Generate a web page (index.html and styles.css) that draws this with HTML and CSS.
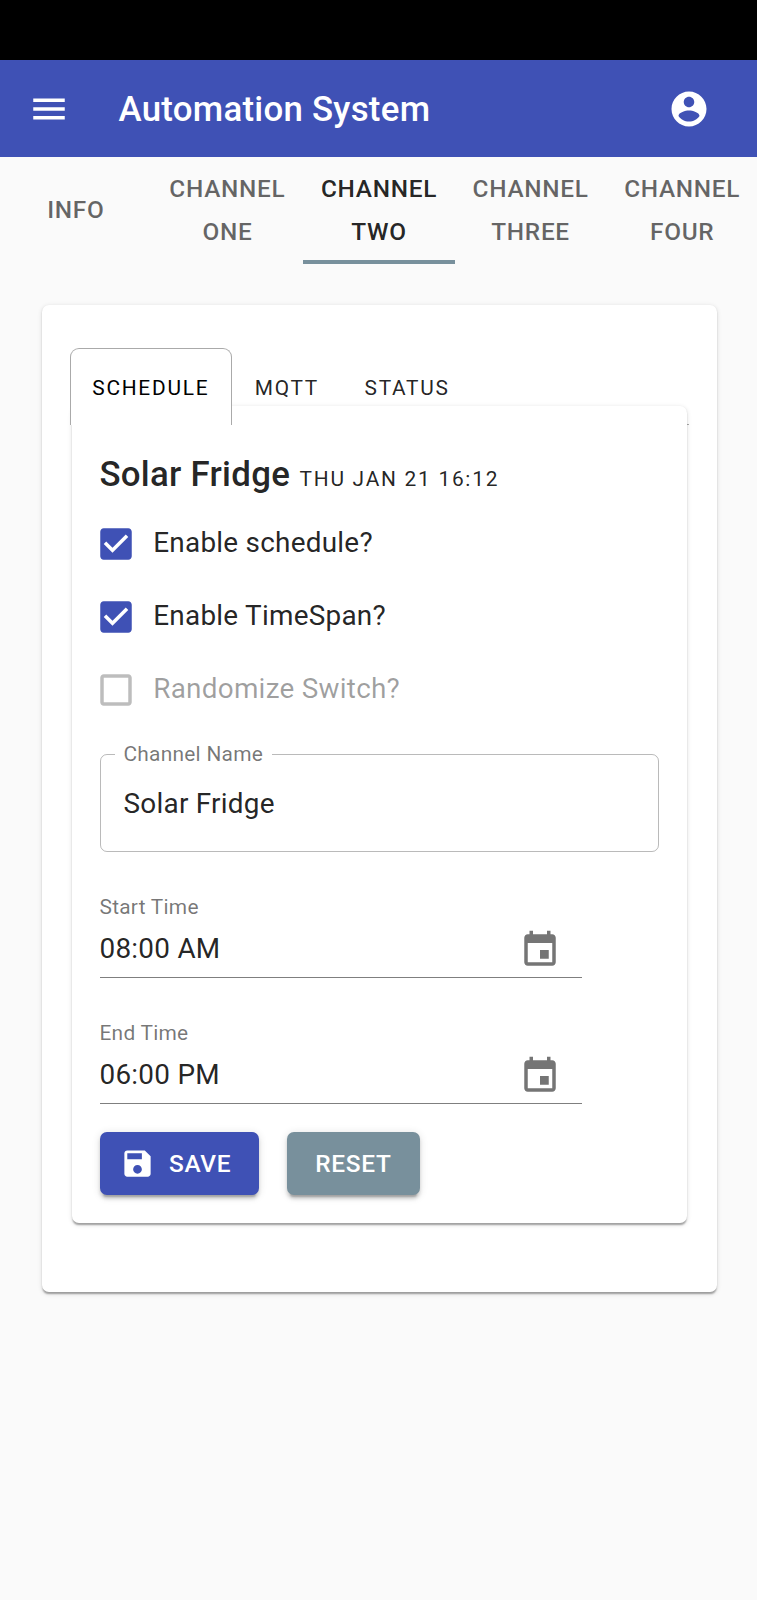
FILE: index.html
```html
<!DOCTYPE html>
<html lang="en">
<head>
<meta charset="utf-8">
<title>Automation System</title>
<link rel="stylesheet" href="styles.css">
</head>
<body>
<div class="status-bar"></div>
<header class="app-bar">
  <svg class="icon" viewBox="0 0 24 24"><path d="M3 18h18v-2H3v2zm0-5h18v-2H3v2zm0-7v2h18V6H3z"/></svg>
  <h1 class="app-title">Automation System</h1>
  <svg class="icon" viewBox="0 0 24 24"><path d="M12 2C6.48 2 2 6.48 2 12s4.48 10 10 10 10-4.480 10-10S17.520 2 12 2zm0 3c1.660 0 3 1.340 3 3s-1.340 3-3 3-3-1.340-3-3 1.340-3 3-3zm0 14.200c-2.500 0-4.710-1.280-6-3.220.030-1.990 4-3.080 6-3.080 1.990 0 5.970 1.090 6 3.080-1.290 1.940-3.500 3.220-6 3.220z"/></svg>
</header>
<nav class="channels">
  <a class="channel">Info</a>
  <a class="channel">Channel One</a>
  <a class="channel channel-active">Channel Two</a>
  <a class="channel">Channel Three</a>
  <a class="channel">Channel Four</a>
</nav>
<main class="card">
  <div class="tabs">
    <div class="tab tab-active">Schedule</div>
    <div class="tab">MQTT</div>
    <div class="tab">Status</div>
  </div>
  <section class="panel">
    <div class="heading"><h2 class="name">Solar Fridge</h2><span class="date">Thu Jan 21 16:12</span></div>
    <div class="check">
      <svg class="box" viewBox="0 0 24 24"><path d="M19 3H5c-1.110 0-2 .9-2 2v14c0 1.100.890 2 2 2h14c1.110 0 2-.9 2-2V5c0-1.100-.890-2-2-2zm-9 14l-5-5 1.410-1.410L10 14.170l7.590-7.590L19 8l-9 9z"/></svg>
      <span class="check-text">Enable schedule?</span>
    </div>
    <div class="check">
      <svg class="box" viewBox="0 0 24 24"><path d="M19 3H5c-1.110 0-2 .9-2 2v14c0 1.100.890 2 2 2h14c1.110 0 2-.9 2-2V5c0-1.100-.890-2-2-2zm-9 14l-5-5 1.410-1.410L10 14.170l7.590-7.590L19 8l-9 9z"/></svg>
      <span class="check-text">Enable TimeSpan?</span>
    </div>
    <div class="check check-disabled">
      <svg class="box" viewBox="0 0 24 24"><path d="M19 5v14H5V5h14m0-2H5c-1.100 0-2 .9-2 2v14c0 1.100.9 2 2 2h14c1.100 0 2-.9 2-2V5c0-1.100-.9-2-2-2z"/></svg>
      <span class="check-text">Randomize Switch?</span>
    </div>
    <div class="outlined">
      <span class="outlined-label">Channel Name</span>
      <span>Solar Fridge</span>
    </div>
    <div class="time">
      <span class="time-label">Start Time</span>
      <div class="time-row">
        <span class="time-value">08:00 AM</span>
        <svg class="icon" viewBox="0 0 24 24"><path d="M17 12h-5v5h5v-5zM16 1v2H8V1H6v2H5c-1.110 0-1.990.9-1.990 2L3 19c0 1.100.890 2 2 2h14c1.100 0 2-.9 2-2V5c0-1.100-.9-2-2-2h-1V1h-2zm3 18H5V8h14v11z"/></svg>
      </div>
    </div>
    <div class="time">
      <span class="time-label">End Time</span>
      <div class="time-row">
        <span class="time-value">06:00 PM</span>
        <svg class="icon" viewBox="0 0 24 24"><path d="M17 12h-5v5h5v-5zM16 1v2H8V1H6v2H5c-1.110 0-1.990.9-1.990 2L3 19c0 1.100.890 2 2 2h14c1.100 0 2-.9 2-2V5c0-1.100-.9-2-2-2h-1V1h-2zm3 18H5V8h14v11z"/></svg>
      </div>
    </div>
    <div class="actions">
      <button class="button button-save">
        <svg class="save-icon" viewBox="0 0 24 24"><path d="M17 3H5c-1.110 0-2 .9-2 2v14c0 1.100.890 2 2 2h14c1.100 0 2-.9 2-2V7l-4-4zm-5 16c-1.660 0-3-1.340-3-3s1.340-3 3-3 3 1.340 3 3-1.340 3-3 3zm3-10H5V5h10v4z"/></svg>
        Save
      </button>
      <button class="button button-reset">Reset</button>
    </div>
  </section>
</main>
</body>
</html>
```

FILE: styles.css
```css
* { box-sizing: border-box; }
body {
  margin: 0;
  min-height: 1600px;
  background: #fafafa;
  color: rgba(0, 0, 0, 0.87);
  font-family: Roboto, "Liberation Sans", sans-serif;
  font-size: 27.9px;
  letter-spacing: 0.009em;
}
svg { display: block; fill: currentColor; flex: none; }
h1, h2 { margin: 0; font-weight: 500; }

.status-bar { height: 59.5px; background: #000; }
.app-bar {
  display: flex;
  align-items: center;
  height: 97.5px;
  padding: 0.5px 47px 0 28px;
  background: #3f51b5;
  color: #fff;
}
.icon { width: 42px; height: 42px; }
.app-title {
  flex: 1;
  margin-left: 48.5px;
  padding-top: 2.5px;
  font-size: 34.85px;
  line-height: 56px;
  letter-spacing: 0.0075em;
}

.channels { display: flex; height: 107px; margin-right: -1px; }
.channel {
  flex: 1;
  display: flex;
  align-items: center;
  justify-content: center;
  padding: 0 10px;
  border-bottom: 4px solid transparent;
  border-top: 4px solid transparent;
  color: rgba(0, 0, 0, 0.6);
  font-size: 24.4px;
  font-weight: 500;
  line-height: 42.9px;
  letter-spacing: 0.02857em;
  text-align: center;
  text-transform: uppercase;
}
.channel-active { color: rgba(0, 0, 0, 0.87); border-bottom-color: #78909c; }

.card {
  margin: 41px 40.5px 0 41.5px;
  padding: 43px 28px 69.5px;
  border-radius: 7px;
  background: #fff;
  box-shadow: 0 3.5px 1.750px -1.750px rgba(0, 0, 0, 0.2), 0 1.750px 1.750px rgba(0, 0, 0, 0.14), 0 1.750px 5px rgba(0, 0, 0, 0.12);
}
.tabs {
  display: flex;
  height: 77px;
  border-bottom: 1px solid #aaa;
}
.tab {
  position: relative;
  z-index: 1;
  height: 77px;
  padding: 12px 21.75px 0;
  border: 1px solid transparent;
  border-bottom: 0;
  border-radius: 9px 9px 0 0;
  font-size: 20.9px;
  line-height: 54px;
  letter-spacing: 0.083em;
  text-transform: uppercase;
}
.tab-active { border-color: #aaa; background: #fff; color: #000; }

.panel {
  position: relative;
  margin: -19px 2px 0;
  padding: 27px 28px 28px;
  border-radius: 7px;
  background: #fff;
  box-shadow: 0 3.5px 1.750px -1.750px rgba(0, 0, 0, 0.2), 0 1.750px 1.750px rgba(0, 0, 0, 0.14), 0 1.750px 5px rgba(0, 0, 0, 0.12);
}
.heading { display: flex; align-items: baseline; gap: 9.5px; height: 74px; padding-top: 7.5px; }
.name { font-size: 34.85px; line-height: 68px; letter-spacing: 0.0075em; }
.date { font-size: 20.9px; letter-spacing: 0.083em; text-transform: uppercase; }

.check { display: flex; align-items: center; gap: 16px; height: 73px; margin-left: -4.25px; }
.check-text { padding-bottom: 2px; }
.box { width: 42px; height: 42px; color: #3f51b5; }
.check-disabled { color: rgba(0, 0, 0, 0.38); }
.check-disabled .box { color: rgba(0, 0, 0, 0.26); }

.outlined {
  position: relative;
  display: flex;
  align-items: center;
  height: 98px;
  margin-top: 28px;
  padding: 0 23px;
  border: 1px solid rgba(0, 0, 0, 0.27);
  border-radius: 7px;
}
.outlined-label {
  position: absolute;
  top: -13px;
  left: 14px;
  padding: 0 9px;
  background: #fff;
  color: rgba(0, 0, 0, 0.54);
  font-size: 20.9px;
  line-height: 24px;
}
.time {
  width: 482px;
  height: 82px;
  margin-top: 43.75px;
  border-bottom: 1.5px solid rgba(0, 0, 0, 0.5);
}
.time-label { display: block; color: rgba(0, 0, 0, 0.54); font-size: 20.9px; line-height: 22px; }
.time-row { display: flex; align-items: center; justify-content: space-between; height: 42px; margin-top: 11px; padding-right: 21px; }
.time-value { padding-bottom: 3px; }
.time-row .icon { color: rgba(0, 0, 0, 0.54); }

.actions { display: flex; gap: 28px; margin-top: 28px; }
.button {
  display: flex;
  align-items: center;
  height: 63px;
  border: 0;
  border-radius: 7px;
  padding: 0 28px;
  color: #fff;
  font: 500 24.4px Roboto, "Liberation Sans", sans-serif;
  letter-spacing: 0.02857em;
  text-transform: uppercase;
  box-shadow: 0 5px 1.750px -3.5px rgba(0, 0, 0, 0.2), 0 3.5px 3.5px rgba(0, 0, 0, 0.14), 0 1.750px 8.750px rgba(0, 0, 0, 0.12);
}
.button-save { padding-left: 20px; gap: 14.5px; background: #3f51b5; }
.button-reset { background: #78909c; }
.save-icon { width: 35px; height: 35px; }
```
